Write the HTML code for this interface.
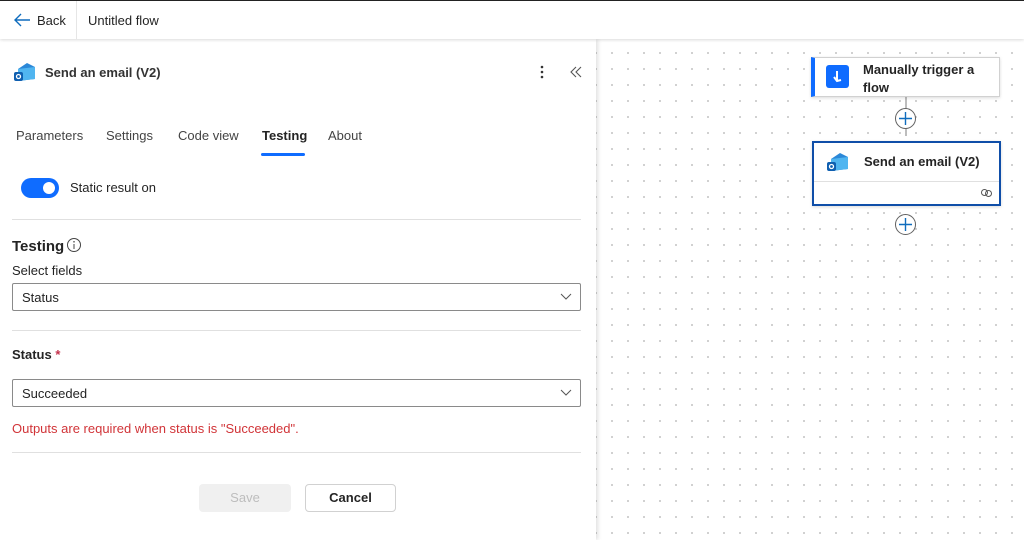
<!DOCTYPE html>
<html><head><style>
*{box-sizing:border-box;margin:0;padding:0}
body{width:1024px;height:540px;overflow:hidden;font-family:"Liberation Sans",sans-serif;color:#242424;background:#fff;position:relative;font-size:13px}
.top{position:absolute;left:0;top:0;width:1024px;height:39px;background:#fff;border-top:1px solid #222;box-shadow:0 1px 3px rgba(0,0,0,.15);z-index:5}
.canvas{position:absolute;left:596px;top:39px;right:0;bottom:0;background-color:#fff;background-image:radial-gradient(circle,#c4c4c4 0.8px,transparent 1.1px);background-size:16px 16px;background-position:8px 6px}
.panel{position:absolute;left:0;top:39px;width:596px;height:501px;background:#fff;box-shadow:2px 0 4px rgba(0,0,0,.12);z-index:3}
.abs{position:absolute;white-space:nowrap}
.sel{position:absolute;left:12px;width:569px;height:28px;border:1px solid #8a8a8a;border-radius:2px;padding:6px 9px;font-size:13px}
.sel svg{position:absolute;right:8px;top:9px}
.hr{position:absolute;left:12px;width:569px;height:1px;background:#e0e0e0}
.card{position:absolute;background:#fff;border:1px solid #d1d1d1;box-shadow:0 1px 3px rgba(0,0,0,.15)}
.plus{position:absolute;width:21px;height:21px;border:1px solid #616161;border-radius:50%;background:#fff}
</style></head><body>
<div class="top">
 <svg class="abs" style="left:13px;top:11px" width="18" height="16" viewBox="0 0 18 16"><path d="M8 2L2 8l6 6M2 8h15" stroke="#0f6cbd" stroke-width="1.4" fill="none"/></svg>
 <div class="abs" style="left:37px;top:12px;font-size:13px">Back</div>
 <div class="abs" style="left:76px;top:0;width:1px;height:38px;background:#e6e6e6"></div>
 <div class="abs" style="left:88px;top:12px;font-size:13px">Untitled flow</div>
</div>
<div class="canvas">
 <div style="position:absolute;left:309px;top:57px;width:2px;height:40px;background:#bdbdbd"></div>
 <div class="card" style="left:215px;top:18px;width:189px;height:40px;border-left:4px solid #0f6cff">
  <div class="abs" style="left:11px;top:7px;width:23px;height:23px;background:#0f6cff;border-radius:3px"><svg width="23" height="23"><path d="M11 6v9M8 12l3 4 4-1" stroke="#fff" stroke-width="2" fill="none"/></svg></div>
  <div class="abs" style="left:48px;top:3px;font-weight:bold;font-size:13px;line-height:18px;white-space:normal;width:130px">Manually trigger a flow</div>
 </div>
 <div class="plus" style="left:299px;top:69px"><svg width="19" height="19"><path d="M9.5 3v13M3 9.5h13" stroke="#0f6cbd" stroke-width="1.4"/></svg></div>
 <div class="card" style="left:216px;top:102px;width:189px;height:65px;border:2px solid #0f4ea8">
  <svg class="abs" style="left:12px;top:8px" width="24" height="22" viewBox="0 0 24 22"><path d="M5 8l9-6 8 4v12l-17 2z" fill="#2b88d8"/><path d="M5 8l17-2v12l-17 2z" fill="#50b5f0"/><rect x="1" y="11" width="9" height="9" rx="2" fill="#0f5fb0"/><circle cx="5.5" cy="15.5" r="2" fill="none" stroke="#fff" stroke-width="1.3"/></svg>
  <div class="abs" style="left:50px;top:11px;font-weight:bold;font-size:13px">Send an email (V2)</div>
  <div class="abs" style="left:0;top:38px;width:185px;height:1px;background:#e0e0e0"></div>
  <svg class="abs" style="left:166px;top:45px" width="13" height="10"><circle cx="4.5" cy="4.5" r="3" fill="none" stroke="#555"/><circle cx="8.5" cy="5.5" r="3" fill="none" stroke="#555"/></svg>
 </div>
 <div class="plus" style="left:299px;top:175px"><svg width="19" height="19"><path d="M9.5 3v13M3 9.5h13" stroke="#0f6cbd" stroke-width="1.4"/></svg></div>
</div>
<div class="panel">
 <svg class="abs" style="left:13px;top:22px" width="24" height="22" viewBox="0 0 24 22"><path d="M5 8l9-6 8 4v12l-17 2z" fill="#2b88d8"/><path d="M5 8l17-2v12l-17 2z" fill="#50b5f0"/><rect x="1" y="11" width="9" height="9" rx="2" fill="#0f5fb0"/><circle cx="5.5" cy="15.5" r="2" fill="none" stroke="#fff" stroke-width="1.3"/></svg>
 <div class="abs" style="left:45px;top:26px;font-size:13px;font-weight:bold;color:#333">Send an email (V2)</div>
 <svg class="abs" style="left:538px;top:25px" width="8" height="16"><circle cx="4" cy="3" r="1.3" fill="#333"/><circle cx="4" cy="8" r="1.3" fill="#333"/><circle cx="4" cy="13" r="1.3" fill="#333"/></svg>
 <svg class="abs" style="left:569px;top:26px" width="14" height="14"><path d="M7 2L2 7l5 5M12 2L7 7l5 5" stroke="#555" fill="none" stroke-width="1.1"/></svg>
 <div class="abs" style="left:16px;top:89px;color:#444">Parameters</div>
 <div class="abs" style="left:106px;top:89px;color:#444">Settings</div>
 <div class="abs" style="left:178px;top:89px;color:#444">Code view</div>
 <div class="abs" style="left:262px;top:89px;font-weight:bold">Testing</div>
 <div class="abs" style="left:261px;top:114px;width:44px;height:3px;background:#0f6cff;border-radius:2px"></div>
 <div class="abs" style="left:328px;top:89px;color:#444">About</div>
 <div class="abs" style="left:21px;top:139px;width:38px;height:20px;border-radius:10px;background:#0f6cff"><div style="position:absolute;right:4px;top:4px;width:12px;height:12px;border-radius:50%;background:#fff"></div></div>
 <div class="abs" style="left:70px;top:141px">Static result on</div>
 <div class="hr" style="top:180px"></div>
 <div class="abs" style="left:12px;top:199px;font-size:15px;font-weight:bold">Testing</div>
 <svg class="abs" style="left:66px;top:198px" width="16" height="16"><circle cx="8" cy="8" r="6.5" fill="none" stroke="#444"/><path d="M8 7v5" stroke="#444"/><circle cx="8" cy="4.8" r=".8" fill="#444"/></svg>
 <div class="abs" style="left:12px;top:224px">Select fields</div>
 <div class="sel" style="top:244px">Status<svg width="12" height="8"><path d="M1 1l5 5 5-5" stroke="#555" fill="none"/></svg></div>
 <div class="hr" style="top:291px"></div>
 <div class="abs" style="left:12px;top:308px;font-weight:bold">Status <span style="color:#c4314b">*</span></div>
 <div class="sel" style="top:340px">Succeeded<svg width="12" height="8"><path d="M1 1l5 5 5-5" stroke="#555" fill="none"/></svg></div>
 <div class="abs" style="left:12px;top:382px;color:#d13438">Outputs are required when status is "Succeeded".</div>
 <div class="hr" style="top:413px"></div>
 <div class="abs" style="left:199px;top:445px;width:92px;height:28px;background:#f0f0f0;border-radius:4px;color:#bdbdbd;text-align:center;line-height:28px">Save</div>
 <div class="abs" style="left:305px;top:445px;width:91px;height:28px;border:1px solid #d1d1d1;border-radius:4px;text-align:center;line-height:26px;font-weight:bold">Cancel</div>
</div>
</body></html>
